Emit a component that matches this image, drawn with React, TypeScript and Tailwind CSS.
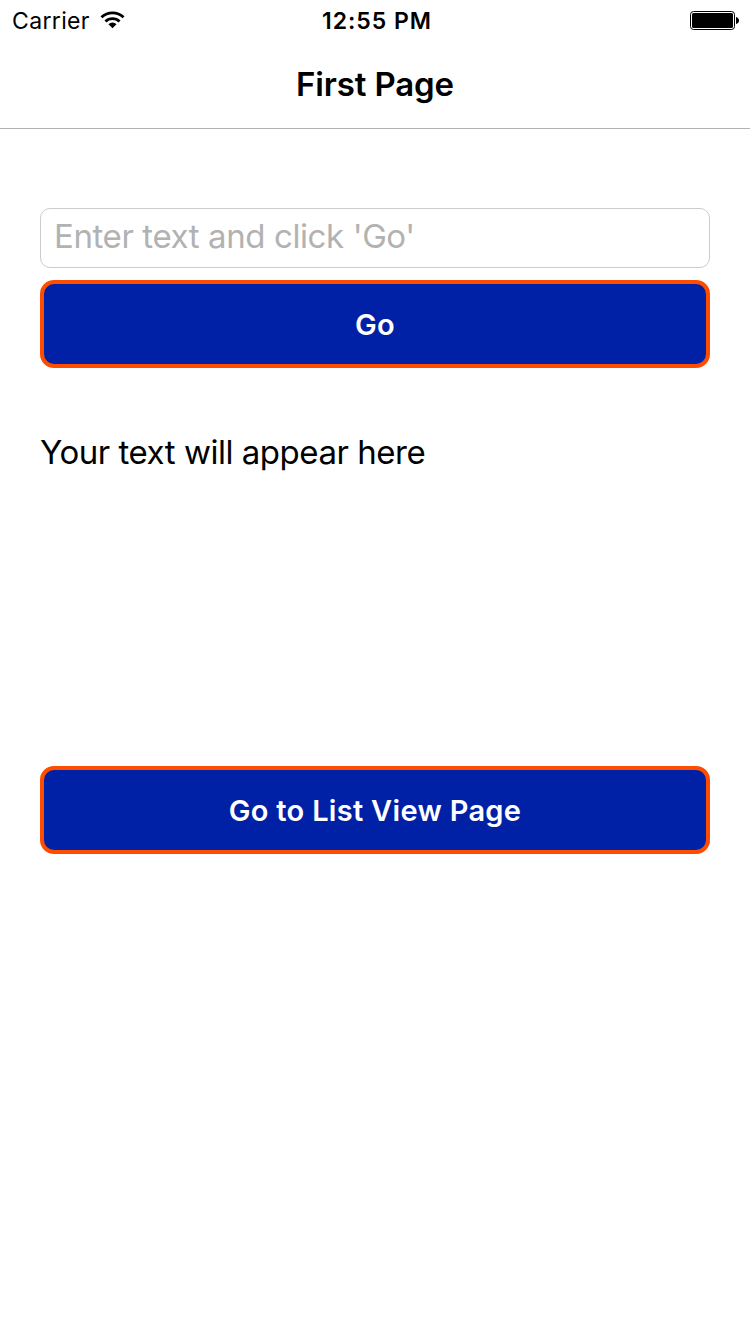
import React from "react";

function StatusBar() {
  return (
    <header className="flex h-10 items-center justify-between pl-3 pr-[10px] text-[23px]">
      <div className="flex flex-1 items-center gap-[10px]">
        <span className="pt-[3px] tracking-[0.35px]">Carrier</span>
        <svg width="25" height="18" viewBox="0 0 26 18" fill="none" stroke="#000" strokeWidth="3">
          <path d="M1.500 6.200a16.500 16.500 0 0 1 23 0" />
          <path d="M5.700 10.500a10.500 10.500 0 0 1 14.600 0" />
          <path d="M13 17.500l-4.200-4.200a6 6 0 0 1 8.400 0z" fill="#000" stroke="none" />
        </svg>
      </div>
      <span className="pl-0.5 pt-[3px] font-[560] tracking-[1px]">12:55 PM</span>
      <div className="flex flex-1 justify-end">
        <svg className="mt-px" width="50" height="20" viewBox="0 0 50 20">
          <rect x="0.5" y="0.5" width="44" height="18" rx="3" fill="none" stroke="#000" />
          <rect x="2" y="2" width="41" height="15" rx="1.5" />
          <path d="M46 6q3 1 3 3.500t-3 3.500z" />
        </svg>
      </div>
    </header>
  );
}

function ActionButton({ label }: { label: string }) {
  return (
    <button className="h-[88px] w-full rounded-[14px] border-4 border-[#ff4d00] bg-[#0021a5] pt-0.5 text-[29px] font-[560] tracking-[0.3px] text-white">
      {label}
    </button>
  );
}

export default function App() {
  return (
    <div className="flex h-[1334px] w-[750px] flex-col bg-white font-['Inter',sans-serif] text-black">
      <StatusBar />
      <div className="flex h-[89px] items-center justify-center border-b border-[#b2b2b2]">
        <h1 className="pt-0.5 text-[33px] font-semibold tracking-[-0.15px]">First Page</h1>
      </div>
      <main className="flex flex-col px-10 pt-[79px]">
        <input
          className="h-[60px] rounded-[10px] border border-[#ccc] px-[13px] pb-1 text-[33px] tracking-[-0.4px] placeholder:text-[#b2b2b2]"
          placeholder="Enter text and click 'Go'"
        />
        <div className="mt-3">
          <ActionButton label="Go" />
        </div>
        <p className="mt-[60px] h-[338px] text-[33px] tracking-[-0.47px]">Your text will appear here</p>
        <ActionButton label="Go to List View Page" />
      </main>
    </div>
  );
}
